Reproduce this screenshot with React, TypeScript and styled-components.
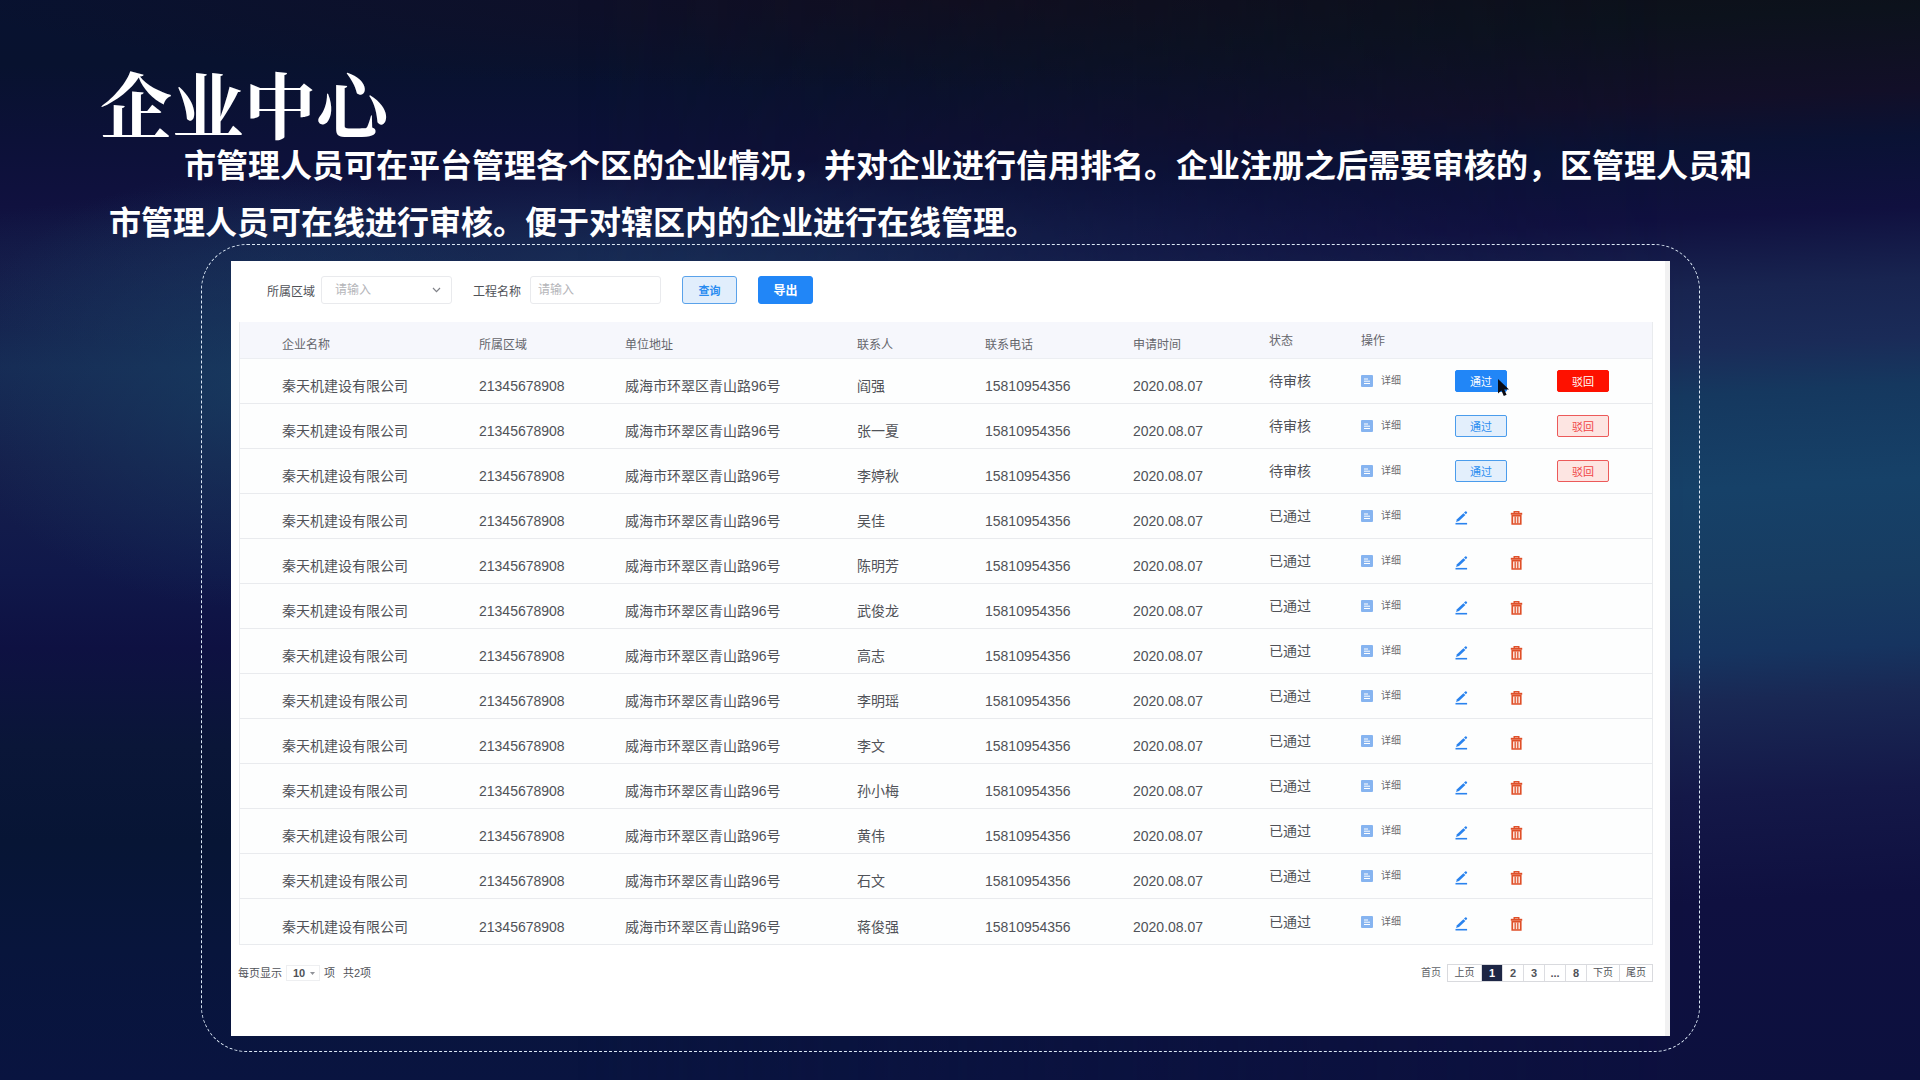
import React from 'react';
import styled, { createGlobalStyle, css } from 'styled-components';

const GlobalStyle = createGlobalStyle`
  *, *::before, *::after { box-sizing: border-box; }
  body {
    margin: 0;
    background: #0a1034;
    font-family: "Liberation Sans", "Noto Sans CJK SC", sans-serif;
  }
`;

const Slide = styled.main`
  position: relative;
  isolation: isolate;
  display: flex;
  flex-direction: column;
  min-height: 100vh;
  padding: 66px 152px 28px 100px;
  background:
    radial-gradient(ellipse 300px 220px at 13% 36%, rgba(24, 62, 98, 0.7), rgba(24, 62, 98, 0) 100%),
    radial-gradient(ellipse 900px 110px at 40% 25%, rgba(26, 54, 92, 0.8), rgba(26, 54, 92, 0) 100%),
    radial-gradient(ellipse 1000px 90px at 50% 0%, rgba(20, 14, 34, 0.8), rgba(20, 14, 34, 0) 100%),
    linear-gradient(180deg,
      #081230 0%, #08122f 6%, #0c1138 13%, #10113f 19%, #141a48 25%, #162a54 34%,
      #151f4c 43%, #10184a 53%, #0e1142 60%, #0a1638 69%, #071535 78%, #08153c 88%, #091440 100%);

  &::before {
    content: "";
    position: absolute;
    inset: 0;
    z-index: -1;
    background: linear-gradient(177deg,
      #100c14 0%, #0c121c 9%, #120f28 16%, #0a1234 20%, #10103f 26%, #182450 32%,
      #1a2b58 37%, #15385f 41%, #164168 49%, #173c62 57%, #163460 63%, #192854 67%,
      #141848 75%, #0f1040 84%, #0c103e 100%);
    mask-image: linear-gradient(90deg, transparent 30%, #000 88%);
  }
`;

const Title = styled.h1`
  margin: 0;
  color: #fff;
  font-family: "Noto Serif CJK SC", "Noto Sans CJK SC", serif;
  font-size: 72px;
  font-weight: 700;
  line-height: 72px;
`;

const Intro = styled.p`
  margin: -3px 0 -5px;
  padding-left: 9px;
  color: #fff;
  font-family: "Noto Sans CJK SC", sans-serif;
  font-size: 32px;
  font-weight: 700;
  line-height: 57px;
  text-indent: 75px;
`;

const Frame = styled.section`
  flex: 1;
  display: flex;
  margin: 0 68px 0 101px;
  padding: 16px 29px 15px;
  border: 1px dashed #dbe8f5;
  border-radius: 46px;
`;

const Panel = styled.div`
  flex: 1;
  padding: 15px 12px 0 8px;
  border-right: 5px solid #f1f1f2;
  background: #fff;
  color: #505258;
`;

const Toolbar = styled.form`
  display: flex;
  align-items: center;
  height: 28px;
  margin: 0 0 18px 28px;
  font-size: 12px;
`;

const Field = styled.div<{ $gap: number }>`
  display: flex;
  align-items: center;
  gap: ${p => p.$gap}px;
  margin-right: 21px;
`;

const SelectWrap = styled.div`
  display: flex;
  align-items: center;
  position: relative;
`;

const control = css`
  width: 131px;
  height: 28px;
  border: 1px solid #e9eaed;
  border-radius: 3px;
  background: #fff;
  color: #b4b5b9;
  font: 12px/18px "Liberation Sans", "Noto Sans CJK SC", sans-serif;
`;

const FilterSelect = styled.select`
  ${control}
  appearance: none;
  padding: 0 24px 0 13px;
`;

const FilterInput = styled.input`
  ${control}
  padding: 0 7px;
  &::placeholder { color: #b4b5b9; }
`;

const SelectArrow = styled.svg`
  position: absolute;
  right: 11px;
  pointer-events: none;
`;

const ToolButton = styled.button<{ $solid?: boolean }>`
  width: 55px;
  height: 28px;
  margin-right: 21px;
  padding: 0;
  border: 1px solid ${p => (p.$solid ? '#2186f7' : '#5aa2ea')};
  border-radius: 3px;
  background: ${p => (p.$solid ? '#2186f7' : '#e1eefc')};
  color: ${p => (p.$solid ? '#fff' : '#2a8cf0')};
  font: 700 ${p => (p.$solid ? 12 : 11)}px/18px "Noto Sans CJK SC", sans-serif;
`;

const Table = styled.table`
  width: 100%;
  table-layout: fixed;
  border-collapse: separate;
  border-spacing: 0;
  border: 1px solid #e9ebee;
  border-top: 0;
`;

const Col = styled.col<{ $w?: number }>`
  width: ${p => (p.$w ? `${p.$w}px` : 'auto')};
`;

const HeadCell = styled.th<{ $low?: boolean }>`
  height: 37px;
  padding: ${p => (p.$low ? 10 : 2)}px 0 0;
  border-bottom: 1px solid #eceef2;
  background: #f6f7fc;
  color: #65666c;
  font-size: 12px;
  font-weight: 400;
  line-height: 18px;
  text-align: left;
  &:first-child { padding-left: 42px; }
`;

const Cell = styled.td<{ $low?: boolean }>`
  height: 45px;
  padding: ${p => (p.$low ? 10 : 0)}px 0 0;
  border-bottom: 1px solid #e9ebee;
  background: #fdfefe;
  font-size: 14px;
  line-height: 20px;
  white-space: nowrap;
  &:first-child { padding-left: 42px; }
  tr:last-child > & { border-bottom: 0; }
`;

const DetailLink = styled.a`
  display: flex;
  align-items: center;
  gap: 8px;
  color: #6b6c70;
  font-size: 10px;
  line-height: 16px;
  text-decoration: none;
`;

const ReviewActions = styled.div`
  display: flex;
  align-items: center;
  gap: 50px;
`;

const EditActions = styled.div`
  display: flex;
  align-items: center;
  gap: 42px;
  padding-top: 4px;
`;

const tones = {
  pass: { line: '#4a9cec', fill: '#e3effc', text: '#2b8df0', active: '#2186f7' },
  reject: { line: '#ec5a5a', fill: '#fde5e2', text: '#f04444', active: '#fe1100' },
};

const ReviewButton = styled.button<{ $tone: 'pass' | 'reject'; $active: boolean }>`
  position: relative;
  width: 52px;
  height: 22px;
  padding: 0;
  border: 1px solid ${p => (p.$active ? tones[p.$tone].active : tones[p.$tone].line)};
  border-radius: 2px;
  background: ${p => (p.$active ? tones[p.$tone].active : tones[p.$tone].fill)};
  color: ${p => (p.$active ? '#fff' : tones[p.$tone].text)};
  font: 11px/16px "Noto Sans CJK SC", sans-serif;
`;

const Pointer = styled.svg`
  position: absolute;
  top: 8px;
  left: 41px;
`;

const IconButton = styled.button`
  display: flex;
  padding: 0;
  border: 0;
  background: none;
`;

const Footer = styled.footer`
  display: flex;
  align-items: center;
  justify-content: space-between;
  margin: 19px 0 0 -1px;
  font-size: 11px;
  line-height: 18px;
`;

const PageSize = styled.div`
  display: flex;
  align-items: center;
`;

const SizeWrap = styled.div`
  display: flex;
  align-items: center;
  position: relative;
  margin: 0 4px;
`;

const SizeSelect = styled.select`
  appearance: none;
  width: 34px;
  height: 16px;
  padding: 0 0 0 6px;
  border: 1px solid #eeeff1;
  background: #fff;
  color: #505258;
  font: 700 11px/14px "Liberation Sans", sans-serif;
`;

const SizeArrow = styled.svg`
  position: absolute;
  right: 5px;
  pointer-events: none;
`;

const Total = styled.span`
  margin-left: 8px;
`;

const Pager = styled.nav`
  display: flex;
  align-items: center;
`;

const PageList = styled.div`
  display: flex;
  margin-left: 6px;
  border: 1px solid #d9dade;
`;

const PageLink = styled.a<{ $wide?: boolean; $current?: boolean }>`
  width: ${p => (p.$wide ? 33 : 21)}px;
  color: ${p => (p.$current ? '#fff' : '#505258')};
  background: ${p => (p.$current ? '#1d2645' : 'transparent')};
  font-size: ${p => (p.$wide ? 10 : 11)}px;
  font-weight: ${p => (p.$wide ? 400 : 700)};
  line-height: 16px;
  text-align: center;
  text-decoration: none;
  & + & { border-left: 1px solid ${p => (p.$current ? '#1d2645' : '#dcdde1')}; }
`;

const FirstLink = styled.a`
  color: #606268;
  font-size: 10px;
  text-decoration: none;
`;

const DocIcon = () => (
  <svg width="12" height="12" viewBox="0 0 12 12" aria-hidden="true">
    <rect width="12" height="12" rx="1" fill="#86b4f0" />
    <path d="M3 4h4M3 6.2h6M3 8.5h6" stroke="#fff" strokeWidth="1" />
  </svg>
);

const PencilIcon = () => (
  <svg width="13" height="14" viewBox="0 0 13 14" aria-hidden="true">
    <path d="M1 11 2 8.2 8.4 2.2 10.4 4.1 4 10z" fill="#2a83ee" />
    <path d="M9 1.6 10.2.5a.9.9 0 0 1 1.2 0l.5.5a.9.9 0 0 1 0 1.2l-1.1 1.1z" fill="#2a83ee" />
    <path d="M.5 12.7h11.6" stroke="#2a83ee" strokeWidth="1.6" />
  </svg>
);

const TrashIcon = () => (
  <svg width="13" height="14" viewBox="0 0 13 14" aria-hidden="true">
    <path d="M4.2 2V.8h4.6V2" fill="none" stroke="#df4f28" strokeWidth="1.4" />
    <path d="M.8 2.8h11.4" stroke="#df4f28" strokeWidth="2" />
    <path d="M2.2 4.8v8.2h8.6V4.8z" fill="#fbe0d6" stroke="#df4f28" strokeWidth="1.6" />
    <path d="M5.2 5.5v7M7.8 5.5v7" stroke="#df4f28" strokeWidth="1.2" />
  </svg>
);

const intro =
  '市管理人员可在平台管理各个区的企业情况\uff0c并对企业进行信用排名。' +
  '企业注册之后需要审核的\uff0c区管理人员和市管理人员可在线进行审核。' +
  '便于对辖区内的企业进行在线管理。';

const headers = ['企业名称', '所属区域', '单位地址', '联系人', '联系电话', '申请时间'];
const columns = [239, 146, 232, 128, 148, 136, 92, 94];
const people = [
  '阎强', '张一夏', '李婷秋', '吴佳', '陈明芳', '武俊龙', '高志',
  '李明瑶', '李文', '孙小梅', '黄伟', '石文', '蒋俊强',
];
const pendingCount = 3;

export default function App() {
  return (
    <Slide>
      <GlobalStyle />
      <Title>企业中心</Title>
      <Intro>{intro}</Intro>
      <Frame>
        <Panel>
          <Toolbar onSubmit={e => e.preventDefault()}>
            <Field $gap={6}>
              <label htmlFor="region">所属区域</label>
              <SelectWrap>
                <FilterSelect id="region">
                  <option>请输入</option>
                </FilterSelect>
                <SelectArrow width="9" height="6" viewBox="0 0 9 6" aria-hidden="true">
                  <path d="M1 1l3.5 3.6L8 1" fill="none" stroke="#808288" strokeWidth="1.2" />
                </SelectArrow>
              </SelectWrap>
            </Field>
            <Field $gap={9}>
              <label htmlFor="project">工程名称</label>
              <FilterInput id="project" placeholder="请输入" />
            </Field>
            <ToolButton type="submit">查询</ToolButton>
            <ToolButton type="button" $solid>导出</ToolButton>
          </Toolbar>
          <Table>
            <colgroup>
              {columns.map((w, i) => <Col key={i} $w={w} />)}
              <Col />
            </colgroup>
            <thead>
              <tr>
                {headers.map(h => <HeadCell key={h} $low>{h}</HeadCell>)}
                <HeadCell>状态</HeadCell>
                <HeadCell colSpan={2}>操作</HeadCell>
              </tr>
            </thead>
            <tbody>
              {people.map((name, i) => {
                const pending = i < pendingCount;
                const active = i === 0;
                return (
                  <tr key={name}>
                    <Cell $low>秦天机建设有限公司</Cell>
                    <Cell $low>21345678908</Cell>
                    <Cell $low>威海市环翠区青山路96号</Cell>
                    <Cell $low>{name}</Cell>
                    <Cell $low>15810954356</Cell>
                    <Cell $low>2020.08.07</Cell>
                    <Cell>{pending ? '待审核' : '已通过'}</Cell>
                    <Cell>
                      <DetailLink href="#detail"><DocIcon />详细</DetailLink>
                    </Cell>
                    <Cell>
                      {pending ? (
                        <ReviewActions>
                          <ReviewButton $tone="pass" $active={active}>
                            通过
                            {active && (
                              <Pointer width="13" height="18" viewBox="0 0 13 18" aria-hidden="true">
                                <path d="M1 0v14.5l3.4-3L6.8 17l2.8-1.2-2.4-5.2H12z" fill="#0a0c14" />
                              </Pointer>
                            )}
                          </ReviewButton>
                          <ReviewButton $tone="reject" $active={active}>驳回</ReviewButton>
                        </ReviewActions>
                      ) : (
                        <EditActions>
                          <IconButton aria-label="编辑"><PencilIcon /></IconButton>
                          <IconButton aria-label="删除"><TrashIcon /></IconButton>
                        </EditActions>
                      )}
                    </Cell>
                  </tr>
                );
              })}
            </tbody>
          </Table>
          <Footer>
            <PageSize>
              <label htmlFor="size">每页显示</label>
              <SizeWrap>
                <SizeSelect id="size"><option>10</option></SizeSelect>
                <SizeArrow width="5" height="3" viewBox="0 0 5 3" aria-hidden="true">
                  <path d="M0 0h5L2.5 3z" fill="#909298" />
                </SizeArrow>
              </SizeWrap>
              项
              <Total>共2项</Total>
            </PageSize>
            <Pager aria-label="分页">
              <FirstLink href="#first">首页</FirstLink>
              <PageList>
                <PageLink href="#prev" $wide>上页</PageLink>
                <PageLink href="#1" $current>1</PageLink>
                <PageLink href="#2">2</PageLink>
                <PageLink href="#3">3</PageLink>
                <PageLink href="#more">...</PageLink>
                <PageLink href="#8">8</PageLink>
                <PageLink href="#next" $wide>下页</PageLink>
                <PageLink href="#last" $wide>尾页</PageLink>
              </PageList>
            </Pager>
          </Footer>
        </Panel>
      </Frame>
    </Slide>
  );
}
